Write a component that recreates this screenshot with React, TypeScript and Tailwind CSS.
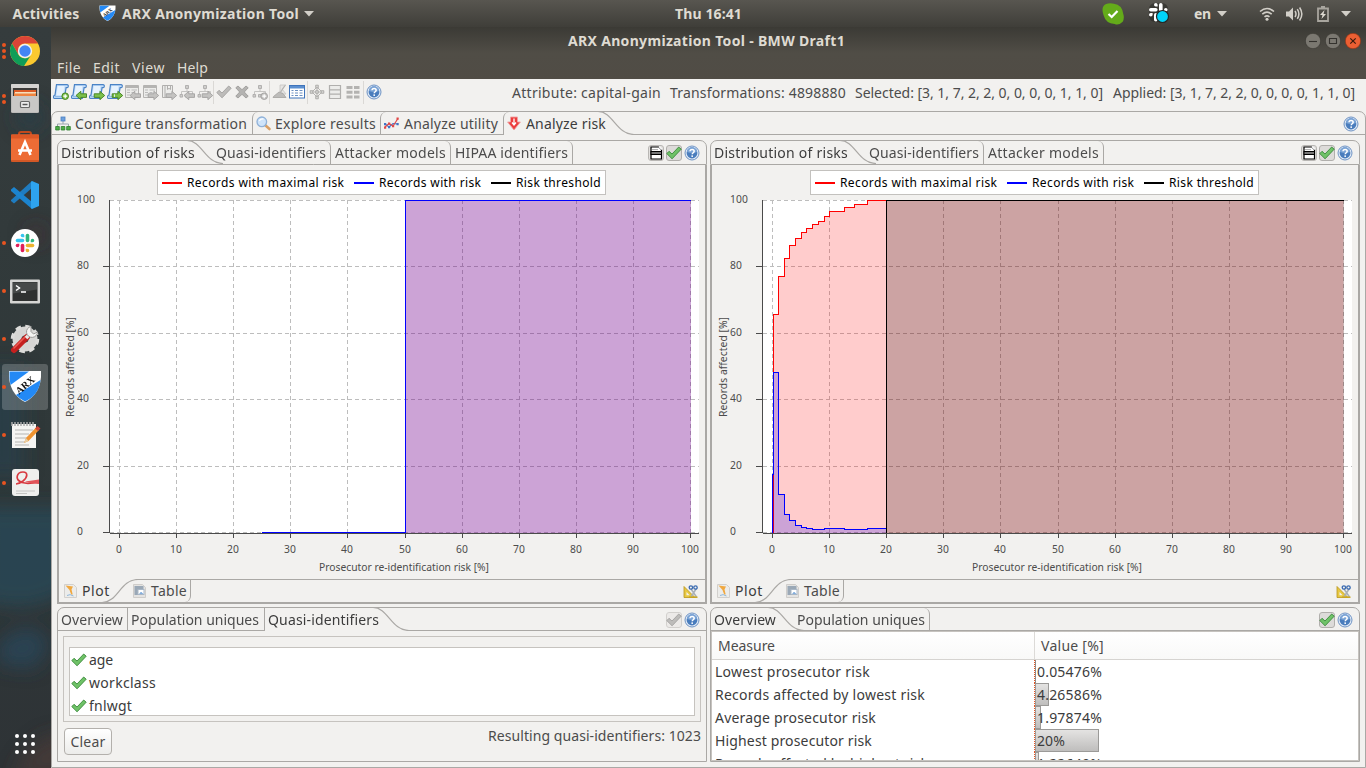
import React, { useLayoutEffect, useRef } from "react";

/* Text run stretched or tightened to an exact advance width. */
function Fit({ w, className = "", children }: { w: number; className?: string; children: string }) {
  const ref = useRef<HTMLSpanElement>(null);
  useLayoutEffect(() => {
    const el = ref.current;
    if (!el) return;
    el.style.letterSpacing = "0px";
    const natural = el.getBoundingClientRect().width;
    el.style.letterSpacing = `${(w - natural) / children.length}px`;
  }, [w, children]);
  return (
    <span ref={ref} className={`inline-block shrink-0 whitespace-pre ${className}`}>
      {children}
    </span>
  );
}

/* ---------- small icons ---------- */
const Help = () => (
  <svg width="16" height="16" viewBox="0 0 16 16" className="shrink-0">
    <circle cx="8" cy="8" r="7" fill="#dfe9f5" stroke="#6f93c4" strokeWidth="1" />
    <circle cx="8" cy="8" r="5.4" fill="#4a7dbd" />
    <path d="M3 7a5 5 0 0 1 10 0q-5 2-10 0z" fill="#7ba4d6" />
    <path d="M6 6.3c0-2.6 4.2-2.4 4.2 0 0 1.4-2 1.5-2 3" fill="none" stroke="#fff" strokeWidth="1.5" />
    <rect x="7.4" y="10.4" width="1.6" height="1.5" fill="#fff" />
  </svg>
);

const Check = ({ gray = false }: { gray?: boolean }) => (
  <svg width="16" height="16" viewBox="0 0 16 16" className="shrink-0">
    <path
      d="M.8 8.6 3 6.3 6 9 12.700 2 15.200 4.200 6.100 13.800z"
      fill={gray ? "#bdbcba" : "#6fc267"}
      stroke={gray ? "#a3a2a0" : "#39893a"}
      strokeWidth="0.9"
      strokeLinejoin="round"
    />
  </svg>
);

const CheckButton = ({ gray = false }: { gray?: boolean }) => (
  <div
    className={`flex h-4 w-4 items-center justify-center rounded-[3px] border ${
      gray ? "border-[#d2d0cd] bg-[#eceae8]" : "border-[#b1afac] bg-[#dddbd9]"
    }`}
  >
    <Check gray={gray} />
  </div>
);

const DocButton = () => (
  <div className="flex h-4 w-4 items-center justify-center rounded-[3px] border border-[#b9b7b4] bg-[#e2e0de]">
    <svg width="14" height="14" viewBox="0 0 14 14" className="shrink-0">
      <path d="M2 1h8l2.5 2.5V13H2z" fill="#fff" stroke="#000" strokeWidth="1.2" />
      <path d="M10 .5 13 3.500" stroke="#fff" strokeWidth="1.500" />
      <rect x="2" y="5.5" width="10.5" height="3" fill="#777" stroke="#000" />
      <path d="M3 3.6h6" stroke="#999" strokeWidth="0.8" />
    </svg>
  </div>
);

const Arrow = ({ left = false, green = true, plus = false }: { left?: boolean; green?: boolean; plus?: boolean }) => {
  const fill = green ? "#7cc04a" : "#c4c3c1";
  const stroke = green ? "#3f7f1c" : "#a3a2a0";
  if (plus)
    return (
      <g>
        <circle cx="12.200" cy="12.200" r="3.300" fill={fill} stroke={stroke} strokeWidth="0.9" />
        <path d="M12.200 10.200v4M10.200 12.200h4" stroke="#fff" strokeWidth="1.2" />
      </g>
    );
  return (
    <path
      d={left ? "M5 11.5 9.8 7.3V9.800H15.500v3.600H9.8v2.300z" : "M15.7 11.5 10.900 7.3V9.800H5.2v3.600h5.700v2.300z"}
      fill={fill}
      stroke={stroke}
      strokeWidth="0.9"
      strokeLinejoin="round"
    />
  );
};

const ToolIcon = ({ kind }: { kind: string }) => (
  <svg width="16" height="16" viewBox="0 0 16 16" className="shrink-0">
    {kind.startsWith("scroll") && (
      <>
        <path d="M3.500.700h10.600c1.700 0 1.500 3 0 3h-1L11.300 14.500H1.500c-1.600 0-1.300-3.300.5-3.300z" fill="#c4defa" stroke="#4a83c6" strokeWidth="1.200" />
        <path d="M4.800 2h6.700L9.900 11.300H3.400z" fill="#e6f2fe" />
        <path d="M1.800 12.700h8.500" stroke="#8db8e6" strokeWidth="1.200" />
        <Arrow plus={kind === "scroll+"} left={kind === "scroll<"} />
        {kind === "scroll>>" && <path d="M7.500 10.300v2.600" stroke="#e6f2fe" strokeWidth=".900" />}
      </>
    )}
    {kind.startsWith("grid") && (
      <>
        <path d="M.5 1.5h13v12H.5z" fill="#ececea" stroke="#b4b3b1" />
        <path d="M.5 3h13" stroke="#b5b4b2" strokeWidth="2" />
        <path d="M2 6h3m1.5 0H12M2 8.500h3m1.500 0h3M2 11h3" stroke="#bbb" />
        <Arrow green={false} left={kind === "grid<"} />
      </>
    )}
    {kind === "book>" && (
      <>
        <path d="M1.500 1.500h10v12h-10zM4 1.500v12M6.500 1.500v4l1.500-1.200L9.500 5.500v-4" fill="#ececea" stroke="#b0afad" />
        <Arrow green={false} />
      </>
    )}
    {kind.startsWith("tree") && (
      <>
        <path d="M8 4.500v3M2.500 10V7.500h11V10" fill="none" stroke="#c5c4c2" />
        <path d="M6.500 1.500h3v3h-3zM1 10.500h2.600v2.600H1zM6.500 10.500h2.600v2.600H6.500z" fill="#cfcecc" stroke="#adacaa" strokeWidth=".900" />
        <Arrow green={false} left={kind === "tree<"} plus={kind === "tree+"} />
      </>
    )}
    {kind === "ok" && <Check gray />}
    {kind === "no" && <path d="M1.800 3.800 4 2l4 3.700L12 2l2.200 1.800L10.300 8l3.900 4.200L12 14l-4-3.700L4 14l-2.200-1.800L5.700 8z" fill="#b4b3b1" stroke="#a3a2a0" />}
    {kind === "broom" && (
      <>
        <path d="M8 1h6l-4 4 4 5h-6z" fill="#e6e5e3" stroke="#c5c4c2" strokeWidth="0.8" />
        <path d="M1.500 12.500 7 8l4 1.500 3 4H1z" fill="#bdbcba" stroke="#a3a2a0" strokeWidth="0.8" />
        <path d="M8 9 13 1.500" stroke="#b5b4b2" strokeWidth="1.300" />
      </>
    )}
    {kind === "table" && (
      <>
        <rect x=".500" y="1.500" width="15" height="12.500" fill="#fff" stroke="#3f74bb" />
        <rect x="1" y="2" width="14" height="2.500" fill="#5b8fd0" />
        <path d="M2.500 6.500h2m1.500 0h3m1.500 0h3M2.500 9h2m1.500 0h3m1.500 0h3M2.500 11.500h2m1.500 0h3m1.500 0h3" stroke="#6b8fc0" />
      </>
    )}
    {kind === "diamond" && (
      <>
        <path d="M8 3 13 8 8 13 3 8zM8 3v10M3 8h10" fill="none" stroke="#b4b3b1" />
        <path d="M6.700 1.200h2.600v2.600H6.700zM6.700 6.700h2.600v2.600H6.700zM6.700 12.200h2.600v2.600H6.700zM1.200 6.700h2.600v2.600H1.200zM12.200 6.700h2.600v2.600h-2.600z" fill="#d8d7d5" stroke="#a3a2a0" strokeWidth=".800" />
      </>
    )}
    {kind === "list" && <path d="M2.500 1.500h11v13h-11zM2.500 5.800h11M2.500 10.200h11" fill="#ececea" stroke="#b0afad" strokeWidth="1.200" />}
    {kind === "blocks" && <path d="M1.500 2h6v3h-6zM9 2h5.500v3H9zM1.500 6.700h6v3h-6zM9 6.700h5.500v3H9zM1.500 11.400h6v3h-6zM9 11.400h5.500v3H9z" fill="#b4b3b1" />}
  </svg>
);

const TreeIcon = () => (
  <svg width="16" height="16" viewBox="0 0 16 16" className="shrink-0">
    <path d="M8 5v3M2.500 11V8h11v3" fill="none" stroke="#9aa5ad" />
    <rect x="6" y="1" width="4" height="4" fill="#6fa0dc" stroke="#4a7fc4" strokeWidth=".800" />
    <path d="M.700 10.500h3.600V14H.700zM6.200 10.500h3.600V14H6.200zM11.700 10.500h3.600V14h-3.600z" fill="#4eae48" stroke="#2c7d2c" strokeWidth=".800" />
  </svg>
);
const MagnifierIcon = () => (
  <svg width="16" height="16" viewBox="0 0 16 16" className="shrink-0">
    <path d="m9 9 4.500 4" stroke="#d9a066" strokeWidth="2.600" strokeLinecap="round" />
    <circle cx="5.800" cy="5.800" r="4.800" fill="#cfe4fa" stroke="#8fb1d8" strokeWidth="1.300" />
    <path d="M3.500 5a3 3 0 0 1 4-1.800" fill="none" stroke="#fff" strokeWidth="1.200" />
  </svg>
);
const LinesIcon = () => (
  <svg width="17" height="16" viewBox="0 0 17 16" className="shrink-0">
    <path d="M2 8 6 11 10 7.500l5 .5" fill="none" stroke="#3f75c8" strokeWidth="1.200" />
    <path d="M2 11 6 7.500l4 2.500 5-7.500" fill="none" stroke="#e04848" strokeWidth="1.200" />
    <path d="M1 7h2.200v2.200H1zM5 10h2.200v2.200H5zM13.500 7h2.200v2.200h-2.200z" fill="#3f75c8" />
    <path d="M1 10.500h2.200v2.200H1zM5 6.500h2.200v2.200H5zM9 9h2.200v2.200H9zM13.500 1.500h2.200v2.200h-2.200z" fill="#e04848" />
  </svg>
);
const RiskIcon = () => (
  <svg width="14" height="16" viewBox="0 0 14 16" className="shrink-0">
    <path d="M3.500 1h7v5h2.900L7 14 .600 6h2.900z" fill="#ec3c3c" stroke="#f0a3a3" strokeWidth=".900" />
    <path d="M7 2.500V8M5 6.500l2 2.400 2-2.400" fill="none" stroke="#fff" strokeWidth="1.300" />
  </svg>
);
const PlotIcon = () => (
  <svg width="13" height="16" viewBox="0 0 13 16" className="shrink-0">
    <path d="M.500 1.500h9L12.500 4.500v10H.500z" fill="#ececea" stroke="#d2d0cd" />
    <path d="M1.500 2.500 9 3.500 7.500 6.500l1.200 5H7.200L5.500 7z" fill="#f0a840" />
    <path d="M3 12.500q3-2 6.500.500" fill="none" stroke="#8fb8dc" />
  </svg>
);
const TableIcon = () => (
  <svg width="13" height="16" viewBox="0 0 13 16" className="shrink-0">
    <path d="M.500 1.500h9L12.500 4.500v10H.500z" fill="#e4e3e1" stroke="#cfcdca" />
    <path d="M1.500 3h9v3H5v6H1.500z" fill="#9aa8b6" />
    <rect x="5" y="6.500" width="6" height="5" fill="#fff" stroke="#a9b7c6" />
    <path d="m6 10.800 2-1.800 2.500 1.800z" fill="#5b93d0" />
  </svg>
);
const ExportIcon = () => (
  <svg width="16" height="16" viewBox="0 0 16 16" className="shrink-0">
    <path d="M1 3.500 12 14.500H1z" fill="#e7c842" stroke="#b9961c" strokeWidth=".800" />
    <path d="M3.500 9v3.200h3.200z" fill="#f3f1ef" />
    <path d="M8 14 13 6M13.500 14 8 6" stroke="#a9b0b8" strokeWidth="1.500" />
    <path d="M6 14.200h8.500" stroke="#c9a522" strokeWidth="1.500" />
    <circle cx="7.900" cy="4.500" r="1.700" fill="none" stroke="#3b6bb0" strokeWidth="1.300" />
    <circle cx="12.500" cy="4.500" r="1.700" fill="none" stroke="#3b6bb0" strokeWidth="1.300" />
  </svg>
);

const ArxArt = () => (
  <>
    <path d="M1 1h32C34 17 27 27 17 32 7 27 0 17 1 1z" fill="#fff" />
    <path d="M1.500 1.500H21L2.500 15Q1 8 1.500 1.500z" fill="#2389f5" />
    <path d="M32.500 10Q31 25 17 31.500 11 28.500 8 25z" fill="#2389f5" />
    <text x="17" y="18.500" textAnchor="middle" transform="rotate(-40 17 15)" fontFamily="Liberation Serif, serif" fontSize="10" fontWeight="bold" fill="#111">
      ARX
    </text>
  </>
);

const Slack = ({ mono = false }: { mono?: boolean }) => {
  const c = mono ? ["#fff", "#fff", "#fff", "#fff"] : ["#36c5f0", "#2eb67d", "#ecb22e", "#e01e5a"];
  return (
    <g>
      <g fill={c[0]}>
        <rect x="0" y="5" width="8.600" height="3.600" rx="1.800" />
        <path d="M8.600 3.600H6.800A1.800 1.800 0 1 1 8.600 1.800z" />
      </g>
      <g fill={c[1]}>
        <rect x="10" y="0" width="3.600" height="8.600" rx="1.800" />
        <path d="M15 8.600V6.800a1.800 1.800 0 1 1 1.800 1.800z" />
      </g>
      <g fill={c[2]}>
        <rect x="10" y="10" width="8.600" height="3.600" rx="1.800" />
        <path d="M10 15h1.800a1.800 1.800 0 1 1-1.800 1.800z" />
      </g>
      <g fill={c[3]}>
        <rect x="5" y="10" width="3.600" height="8.600" rx="1.800" />
        <path d="M3.600 10v1.800A1.800 1.800 0 1 1 1.800 10z" />
      </g>
    </g>
  );
};

/* ---------- dock ---------- */
function DockItem({ dots = 0, active = false, children }: { dots?: number; active?: boolean; children: React.ReactNode }) {
  return (
    <div className="flex h-12 items-center">
      <div className={`ml-[2px] flex h-[46px] w-[46px] items-center rounded-[3px] ${active ? "bg-white/20" : ""}`}>
        <div className="flex w-1 flex-col items-center gap-[2px]">
          {Array.from({ length: dots }, (_, i) => (
            <i key={i} className="h-1 w-1 shrink-0 rounded-full bg-[#e95420]" />
          ))}
        </div>
        <svg width="34" height="34" viewBox="0 0 34 34" className="ml-[2px] shrink-0">
          {children}
        </svg>
      </div>
    </div>
  );
}

function Dock() {
  return (
    <div className="relative flex h-[741px] w-[51px] shrink-0 flex-col overflow-hidden bg-linear-to-b from-[#353c3d] via-[#2f3839] via-55% to-[#2e3336]">
      <svg width="51" height="741" className="absolute inset-0">
        <defs>
          <filter id="haze" filterUnits="userSpaceOnUse" x="-60" y="-60" width="180" height="880">
            <feGaussianBlur stdDeviation="9" />
          </filter>
        </defs>
        <g filter="url(#haze)">
          <path d="M-20 340h44v110h-44z" fill="#25404e" opacity=".6" />
          <path d="M-20 480h90v82q-40 30-90 10z" fill="#27495a" opacity=".75" />
          <path d="M-4 618q36-34 54 0l-16 24-34-4z" fill="#26485c" opacity=".75" />
          <circle cx="36" cy="208" r="10" fill="#4d2f30" opacity=".6" />
          <circle cx="30" cy="90" r="14" fill="#24404c" opacity=".6" />
          <path d="M12 751q20-50 59-44v44z" fill="#4f3a35" opacity=".6" />
        </g>
      </svg>
      <div className="relative flex flex-col">
        <DockItem dots={3}>
          <circle cx="17" cy="17" r="15" fill="#fbc92f" />
          <path d="M4 9.500A15 15 0 0 1 30 9.500H17a7.500 7.500 0 0 0-6.500 3.800l-.2 7z" fill="#db4437" />
          <path d="M4 9.500A15 15 0 0 0 16 32l6.600-10.200A7.500 7.500 0 0 1 10.500 20.700z" fill="#0f9d58" />
          <circle cx="17" cy="17" r="7.200" fill="#f1f1f1" />
          <circle cx="17" cy="17" r="5.700" fill="#4285f4" />
        </DockItem>
        <DockItem dots={2}>
          <rect x="3" y="2" width="28" height="29" rx="1.500" fill="#bcbbb9" />
          <rect x="3" y="2" width="28" height="4" rx="1" fill="#d5d4d2" />
          <rect x="5" y="6" width="24" height="8" fill="#3c3b39" />
          <path d="M6 8h22v6H6z" fill="#dd5b25" />
          <path d="M7 10h21l-1 4H6z" fill="#f6dfbd" />
          <path d="M6 11.500h22V14H6z" fill="#ef8440" />
          <rect x="4" y="14" width="26" height="16" fill="#c9c8c6" />
          <rect x="12.500" y="19.500" width="9" height="6" rx="1" fill="#eee" stroke="#666" strokeWidth="1.200" />
          <path d="M14.500 22.500h5" stroke="#555" strokeWidth="1.500" />
        </DockItem>
        <DockItem>
          <path d="M11 7V4q0-2 2-2h8q2 0 2 2v3" fill="none" stroke="#c2491c" strokeWidth="2" />
          <rect x="3" y="4.500" width="28" height="27.500" rx="1.500" fill="#ed6c35" />
          <rect x="3" y="4.500" width="28" height="4" fill="#dd5826" />
          <path d="M11.500 25 17 12l5.500 13M10 20.500h14" fill="none" stroke="#fff" strokeWidth="2.600" />
          <path d="M3 31h28" stroke="#b94418" />
        </DockItem>
        <DockItem>
          <path d="M24 3v7L6 25.500 3 23V22z" fill="#1f7cc0" />
          <path d="M24 31v-7L6 9 3 11.500V13z" fill="#1c84cf" />
          <path d="m24 3 7 3v22l-7 3-1-1V4z" fill="#2ea3ee" />
        </DockItem>
        <DockItem dots={1}>
          <circle cx="17" cy="17" r="14" fill="#fff" />
          <g transform="translate(7.700 7.700)">
            <Slack />
          </g>
        </DockItem>
        <DockItem dots={1}>
          <rect x="2" y="5.500" width="30" height="24" rx="1" fill="#d5d5d3" />
          <rect x="4.500" y="8" width="25" height="19" fill="#2f3130" />
          <path d="M5 8.500h24v7L5 19.500z" fill="#474a49" />
          <path d="m8 11.500 3.500 2.500L8 16.500M13 18h5" fill="none" stroke="#fff" strokeWidth="1.500" />
        </DockItem>
        <DockItem dots={1}>
          <circle cx="17" cy="17" r="8" fill="none" stroke="#d6d6d4" strokeWidth="9" />
          <circle cx="17" cy="17" r="12.500" fill="none" stroke="#dcdcda" strokeWidth="3.500" strokeDasharray="5.500 4.300" />
          <path d="M6 28 19 15" stroke="#c5201f" strokeWidth="6" strokeLinecap="round" />
          <path d="m6 26 11-11" stroke="#ec5a52" strokeWidth="1.500" strokeLinecap="round" />
          <path d="m18 16 5-5" stroke="#e9e9e7" strokeWidth="3.500" />
          <path d="M23 4.500A5.500 5.500 0 1 0 29.500 10l-4 2-2.500-2.500z" fill="#f4f4f2" stroke="#9a9a98" />
        </DockItem>
        <DockItem dots={1} active>
          <ArxArt />
        </DockItem>
        <DockItem dots={1}>
          <path d="M4 6h24v24H4z" fill="#f5f5f3" />
          <path d="M4 4v4m3-4v4m3-4v4m3-4v4m3-4v4m3-4v4m3-4v4m3-4v4" stroke="#aaa" strokeWidth="1.500" />
          <path d="M7 12h18M7 16h14M7 20h12M7 24h10M7 27h14" stroke="#b5b5b3" />
          <path d="m16 25 2-5L28 9.500l3 2.500L20.500 23z" fill="#f0932f" />
          <path d="m27 10.500 2.500-2.500 3 2.500-2.500 2.500z" fill="#cf4436" />
          <path d="m16 25 2-5 2.500 3z" fill="#e8cfa4" />
        </DockItem>
        <DockItem dots={1}>
          <rect x="4" y="3" width="27" height="27" rx="3" fill="#efefed" />
          <path d="M30 15.500q-9 3-16 1C6 13.500 9 6 15 6c5 0 5 5 0 9q-4 3-7 3" fill="none" stroke="#d83a40" strokeWidth="1.700" />
          <path d="M31 13.500V18q-7 0-14-2.500z" fill="#e2555a" />
          <path d="M8 25h19M8 27.500h11" stroke="#c5c5c3" />
        </DockItem>
      </div>
      <div className="relative mt-auto mb-[14px] ml-[15px] grid w-5 grid-cols-3 gap-1">
        {Array.from({ length: 9 }, (_, i) => (
          <i key={i} className="h-1 w-1 rounded-full bg-white" />
        ))}
      </div>
    </div>
  );
}

/* ---------- shell bars ---------- */
const Caret = () => (
  <svg width="10" height="6" viewBox="0 0 10 6" className="shrink-0">
    <path d="M0 0h10L5 5.500z" fill="#d2cfc8" />
  </svg>
);

function TopBar() {
  return (
    <div className="flex h-[27px] shrink-0 items-center bg-linear-to-b from-[#585650] to-[#3f3e39] text-[14px] font-bold text-[#dfdbd2]">
      <Fit w={67} className="ml-[12.500px]">Activities</Fit>
      <svg width="17" height="17" viewBox="0 0 34 34" className="ml-[19.500px] shrink-0">
        <ArxArt />
      </svg>
      <Fit w={177} className="ml-[6px]">ARX Anonymization Tool</Fit>
      <div className="ml-[5px]"><Caret /></div>
      <Fit w={67} className="ml-[361px]">Thu 16:41</Fit>
      <svg width="22" height="22" viewBox="0 0 22 22" className="ml-[360px] shrink-0">
        <path d="M6 .500Q9 0 12 .800q8 1 9.200 10 1.500 4-.5 8-4 4-8 2.200-9-.5-11.200-9Q0 8 .800 4.500 2 1 6 .500z" fill="#64ab1a" />
        <path d="m6.500 11 3.200 3L15.500 8" fill="none" stroke="#fff" strokeWidth="2.200" />
      </svg>
      <svg width="21" height="21" viewBox="0 0 21 21" className="ml-[25px] shrink-0">
        <rect width="19" height="19" rx="6" fill="#292927" opacity=".6" />
        <Slack mono />
        <circle cx="13.500" cy="13.500" r="6" fill="#00d4fa" stroke="#262624" strokeWidth="1.200" />
      </svg>
      <Fit w={17} className="ml-[24px]">en</Fit>
      <div className="ml-[6px]"><Caret /></div>
      <svg width="16" height="14" viewBox="0 0 16 14" className="ml-[32px] shrink-0">
        <path d="M1 4.500q7-6 14 0M3.300 7.200q4.700-4 9.400 0M5.500 9.900q2.500-2 5 0" fill="none" stroke="#d2cfc8" strokeWidth="1.600" />
        <circle cx="8" cy="12.200" r="1.500" fill="#d2cfc8" />
      </svg>
      <svg width="17" height="16" viewBox="0 0 17 16" className="ml-[11px] shrink-0">
        <path d="M0 5.500h3L7 1.500v13L3 10.500H0z" fill="#d2cfc8" />
        <path d="M9 5q2 3 0 6M11.300 3.200q3.200 4.800 0 9.600M13.600 1.500q4.500 6.500 0 13" fill="none" stroke="#d2cfc8" strokeWidth="1.500" />
      </svg>
      <svg width="12" height="16" viewBox="0 0 12 16" className="ml-[14px] shrink-0">
        <path d="M1 2.500h10V15H1z" fill="none" stroke="#a8a59e" strokeWidth="1.800" />
        <path d="M4 0h4v2H4z" fill="#a8a59e" />
        <path d="m7.500 4-4.500 5h2.500L4.500 13 9 8H6.500z" fill="#dfdbd2" />
      </svg>
      <div className="ml-[12px]"><Caret /></div>
    </div>
  );
}

function TitleBar() {
  return (
    <div className="h-[52px] shrink-0 bg-linear-to-b from-[#3b3a35] via-[#504d46] via-50% to-[#504c45] text-[14px] text-[#dfdbd2]">
      <div className="flex h-7 items-center">
        <Fit w={277} className="ml-[517px] font-bold">ARX Anonymization Tool - BMW Draft1</Fit>
        <div className="mr-[5px] ml-auto flex gap-1">
          <svg width="16" height="16" viewBox="0 0 16 16"><circle cx="8" cy="8" r="7.700" fill="#7b7871" stroke="#34322e" strokeWidth=".600" /><path d="M4 8.500h8" stroke="#34322e" strokeWidth="1.100" /></svg>
          <svg width="16" height="16" viewBox="0 0 16 16"><circle cx="8" cy="8" r="7.700" fill="#7b7871" stroke="#34322e" strokeWidth=".600" /><path d="M4.500 5.500h7v5h-7z" fill="none" stroke="#34322e" strokeWidth="1.100" /></svg>
          <svg width="16" height="16" viewBox="0 0 16 16"><circle cx="8" cy="8" r="7.700" fill="#ec5f33" stroke="#8d3013" strokeWidth=".600" /><path d="m5.300 5.300 5.400 5.400m0-5.400-5.400 5.400" stroke="#3a1a0d" strokeWidth="1.200" /></svg>
        </div>
      </div>
      <div className="flex h-6 items-center pt-[2px] pl-[6px]">
        <Fit w={24}>File</Fit>
        <Fit w={27} className="ml-[12px]">Edit</Fit>
        <Fit w={33} className="ml-[12px]">View</Fit>
        <Fit w={31} className="ml-[12px]">Help</Fit>
      </div>
    </div>
  );
}

const Sep = () => <div className="mt-[-3px] h-[23px] w-px shrink-0 bg-[#dad8d5]" />;

function ToolBar() {
  return (
    <div className="flex h-8 shrink-0 items-start pt-[5px] pr-[11px] pl-[2px]">
      <div className="flex items-start">
        <div className="flex gap-[2px]">
          {["scroll+", "scroll<", "scroll>", "scroll>>", "grid<", "grid>", "book>", "tree<", "tree>"].map((k) => (
            <ToolIcon key={k} kind={k} />
          ))}
        </div>
        <Sep />
        <div className="ml-[2px] flex gap-[2px]">
          <ToolIcon kind="ok" /><ToolIcon kind="no" /><ToolIcon kind="tree+" />
        </div>
        <div className="ml-px"><Sep /></div>
        <div className="ml-[2px] flex gap-[1px]">
          <ToolIcon kind="broom" /><ToolIcon kind="table" />
        </div>
        <div className="ml-[2px]"><Sep /></div>
        <div className="ml-px flex gap-[2px]">
          <ToolIcon kind="diamond" /><ToolIcon kind="list" /><ToolIcon kind="blocks" />
        </div>
        <div className="ml-[2px]"><Sep /></div>
        <div className="ml-[2px]"><Help /></div>
      </div>
      <div className="mt-[-2px] ml-auto flex">
        <Fit w={149}>Attribute: capital-gain</Fit>
        <Fit w={176} className="ml-[9px]">Transformations: 4898880</Fit>
        <Fit w={248} className="ml-[9px]">Selected: [3, 1, 7, 2, 2, 0, 0, 0, 0, 1, 1, 0]</Fit>
        <Fit w={242} className="ml-[10px]">Applied: [3, 1, 7, 2, 2, 0, 0, 0, 0, 1, 1, 0]</Fit>
      </div>
    </div>
  );
}

/* ---------- folder pieces ---------- */
const Slope = ({ className }: { className: string }) => (
  <svg width="36" height="24" viewBox="0 0 36 24" className={`absolute -top-px ${className}`}>
    <path d="M0 .500C15 .500 18 23.500 36 23.500" fill="none" stroke="#aaa8a5" strokeWidth="1.200" />
  </svg>
);

const MAX_RISK =
  "M773.500 533V314.500H778.500V276.500H784.500V258.500H789.500V245.500H795.500V238.500H801.500V232.500H806.500V228.500H812.500V224.500H818.500V221.500H824.500V216.500H829.500V211.500H844.500V207.500H854.500V204.500H867.500V200.500H886.500";
const WITH_RISK =
  "M772.500 533V474.500H773.500V372.500H778.500V494.500H784.500V514.500H789.500V520.500H795.500V525.500H801.500V527.500H806.500V528.500H812.500V529.500H824.500V528.500H844.500V529.500H867.500V528.500H886.500";

function Chart({ kind }: { kind: "left" | "right" }) {
  const xs = Array.from({ length: 11 }, (_, i) => Math.floor(772.5 + 57.1 * i) + 0.5);
  const ys = [532.5, 466.5, 399.5, 333.5, 266.5, 200.5];
  return (
    <div className="flex min-h-0 flex-1 flex-col items-start pt-[5px]">
      <div className="ml-[98px] flex h-[25px] w-[449px] shrink-0 items-center border border-[#c3c1be] bg-white pl-[4px] text-[12px] text-black">
        <i className="h-[2px] w-5 bg-[#ff0000]" />
        <Fit w={157.4} className="ml-[5px]">Records with maximal risk</Fit>
        <i className="ml-[9.600px] h-[2px] w-5 bg-[#0000ff]" />
        <Fit w={102.4} className="ml-[5px]">Records with risk</Fit>
        <i className="ml-[9.600px] h-[2px] w-5 bg-black" />
        <Fit w={85} className="ml-[5px]">Risk threshold</Fit>
      </div>
      <svg width="645" height="384" viewBox="712 195 645 384" className="shrink-0 overflow-visible" fontFamily="Noto Sans, sans-serif" fontSize="10.300" fill="#4c4c4c">
        <rect x="763" y="200" width="589" height="333" fill="#fff" />
        <g stroke="#bdbdbd" strokeDasharray="4 3" shapeRendering="crispEdges">
          {xs.map((x) => <path key={x} d={`M${x} 533V200`} />)}
          {ys.map((y) => <path key={y} d={`M763 ${y}H1352`} />)}
        </g>
        {kind === "left" ? (
          <>
            <rect x="1058" y="200" width="286" height="333" fill="#ff0000" fillOpacity=".2" />
            <rect x="1058" y="200" width="286" height="333" fill="#0000ff" fillOpacity=".2" />
            <path d="M915 532.500H1058.500V200.500H1343.500" fill="none" stroke="#0000ff" shapeRendering="crispEdges" />
          </>
        ) : (
          <>
            <path d={`${MAX_RISK}H1343.500V533z`} fill="#ff0000" fillOpacity=".2" />
            <path d={MAX_RISK} fill="none" stroke="#ff0000" shapeRendering="crispEdges" />
            <path d={`${WITH_RISK}V533z`} fill="#0000ff" fillOpacity=".2" />
            <path d={WITH_RISK} fill="none" stroke="#0000ff" shapeRendering="crispEdges" />
            <rect x="886" y="200" width="458" height="333" fill="#000" fillOpacity=".2" />
            <path d="M886.500 533V200.500H1343.500" fill="none" stroke="#000" shapeRendering="crispEdges" />
          </>
        )}
        <g stroke="#4a4a4a" shapeRendering="crispEdges">
          <path d="M762.500 200V533M763 533.500H1352" />
          {xs.map((x) => <path key={x} d={`M${x} 533v5`} />)}
          {ys.slice(0, 5).map((y) => <path key={y} d={`M756 ${y}h6`} />)}
        </g>
        {xs.map((x, i) => (
          <text key={x} x={x - 0.5} y="553" textAnchor="middle" textLength={i === 0 ? 6 : i === 10 ? 18 : 12}>{i * 10}</text>
        ))}
        {ys.map((y, i) => (
          <text key={y} x="730" y={y + 2.5} textLength={i === 0 ? 6 : i === 5 ? 18 : 12}>{i * 20}</text>
        ))}
        <text x="1057" y="571" textAnchor="middle" textLength="170">Prosecutor re-identification risk [%]</text>
        <text transform="translate(727 367) rotate(-90)" textAnchor="middle" textLength="100">Records affected [%]</text>
      </svg>
    </div>
  );
}

const PlainTab = ({ w, text, className }: { w: number; text: string; className: string }) => (
  <div className={`flex h-full shrink-0 items-center border-r border-[#aaa8a5] ${className}`}>
    <Fit w={w}>{text}</Fit>
  </div>
);

function ChartFolder({ kind }: { kind: "left" | "right" }) {
  return (
    <section className="flex h-[464px] w-[650px] shrink-0 flex-col">
      <div className="relative flex h-[25px] shrink-0 items-center rounded-t-[7px] border border-[#aaa8a5] pl-[3px]">
        <Fit w={134} className="text-[#3c3c3c]">Distribution of risks</Fit>
        <Slope className="left-[129px]" />
        <PlainTab w={110} text="Quasi-identifiers" className="ml-[21px] w-[115px] rounded-tr-[6px]" />
        <PlainTab w={111} text="Attacker models" className="w-[120px] rounded-tr-[6px] pl-[4px]" />
        {kind === "left" && <PlainTab w={113} text="HIPAA identifiers" className="w-[122px] rounded-tr-[6px] pl-[4px]" />}
        <div className="mr-[6px] ml-auto flex gap-[2px]">
          <DocButton /><CheckButton /><Help />
        </div>
      </div>
      <div className="flex min-h-0 flex-1 flex-col border-x-2 border-b-2 border-[#aaa8a5]">
        <Chart kind={kind} />
        <div className="relative flex h-[23px] shrink-0 items-center pl-[5px]">
          <PlotIcon />
          <Fit w={28} className="ml-[5px] text-[#3c3c3c]">Plot</Fit>
          <svg width="36" height="24" viewBox="0 0 36 24" className="absolute top-0 left-[43px]">
            <path d="M0 23.500C16 23.500 18 .500 36 .500" fill="none" stroke="#aaa8a5" strokeWidth="1.200" />
          </svg>
          <div className="ml-[23px] flex h-full w-[58px] shrink-0 items-center rounded-br-[6px] border-r border-[#aaa8a5]">
            <TableIcon />
            <Fit w={36} className="ml-[5px]">Table</Fit>
          </div>
          <div className="absolute top-0 right-0 left-[78px] h-px bg-[#aaa8a5]" />
          <div className="mr-[6px] ml-auto"><ExportIcon /></div>
        </div>
      </div>
    </section>
  );
}

function QuasiFolder() {
  return (
    <section className="flex h-[155px] w-[650px] shrink-0 flex-col rounded-t-[7px] border border-[#aaa8a5]">
      <div className="relative flex h-[23px] shrink-0 items-center">
        <div className="flex h-full w-[207px] shrink-0 border-b border-[#aaa8a5]">
          <PlainTab w={62} text="Overview" className="w-[70px] pt-px pl-[3px]" />
          <PlainTab w={128} text="Population uniques" className="w-[137px] pt-px pl-[3px]" />
        </div>
        <Fit w={111} className="ml-[3px] text-[#3c3c3c]">Quasi-identifiers</Fit>
        <Slope className="left-[315px]" />
        <div className="ml-[29px] flex h-full flex-1 items-center justify-end gap-[2px] border-b border-[#aaa8a5] pt-px pr-[6px]">
          <CheckButton gray /><Help />
        </div>
      </div>
      <div className="mx-[5px] mt-[5px] h-[86px] shrink-0 border border-[#c6c3bf] px-[5px] pt-[10px]">
        <div className="flex h-[69px] flex-col border border-[#c6c3bf] bg-white pl-[1px] text-[#3c3c3c]">
          {([["age", 24], ["workclass", 67], ["fnlwgt", 43]] as [string, number][]).map(([t, w]) => (
            <div key={t} className="flex h-[23px] shrink-0 items-center">
              <Check />
              <Fit w={w} className="ml-[2px]">{t}</Fit>
            </div>
          ))}
        </div>
      </div>
      <div className="flex items-start pt-[6px] pr-[5px] pl-[6px]">
        <button className="flex h-[27px] w-[48px] items-center justify-center rounded-[4px] border border-[#b3b0ac] bg-linear-to-b from-white to-[#ececea]">
          <Fit w={35}>Clear</Fit>
        </button>
        <Fit w={213} className="mt-[-3px] ml-auto">Resulting quasi-identifiers: 1023</Fit>
      </div>
    </section>
  );
}

const measures: { name: string; w: number; value: string; vw: number; bar: number }[] = [
  { name: "Lowest prosecutor risk", w: 155, value: "0.05476%", vw: 65, bar: 0 },
  { name: "Records affected by lowest risk", w: 210, value: "4.26586%", vw: 65, bar: 14 },
  { name: "Average prosecutor risk", w: 161, value: "1.97874%", vw: 65, bar: 6 },
  { name: "Highest prosecutor risk", w: 157, value: "20%", vw: 28, bar: 64 },
  { name: "Records affected by highest risk", w: 213, value: "1.22649%", vw: 65, bar: 4 },
];

function OverviewFolder() {
  return (
    <section className="flex h-[155px] w-[650px] shrink-0 flex-col rounded-t-[7px] border border-[#aaa8a5]">
      <div className="relative flex h-[23px] shrink-0 items-center border-b border-[#aaa8a5] pl-[3px]">
        <Fit w={62} className="mt-px text-[#3c3c3c]">Overview</Fit>
        <Slope className="left-[57px]" />
        <PlainTab w={128} text="Population uniques" className="ml-[21px] w-[133px] rounded-tr-[6px] pt-px" />
        <div className="mr-[6px] ml-auto flex gap-[2px] pt-px"><CheckButton /><Help /></div>
      </div>
      <div className="flex min-h-0 flex-1 flex-col overflow-hidden border border-[#c6c3bf] bg-white text-[#3c3c3c]">
        <div className="flex h-[28px] shrink-0 items-center border-b border-[#d6d4d1] bg-linear-to-b from-white to-[#f9f9f8] text-[#4c4c4c]">
          <div className="flex h-full w-[323px] items-center border-r border-[#dcdad7] pl-[6px]"><Fit w={57}>Measure</Fit></div>
          <Fit w={63} className="ml-[6px]">Value [%]</Fit>
        </div>
        {measures.map((m) => (
          <div key={m.name} className="flex h-[23px] shrink-0 items-center">
            <div className="flex h-full w-[323px] shrink-0 items-center border-r border-dotted border-[#e95420] pl-[3px]"><Fit w={m.w}>{m.name}</Fit></div>
            <div className="relative flex h-full items-center border-l border-[#8d8d8b]">
              {m.bar > 0 && (
                <i className="absolute top-0 -left-px h-full border border-[#9b9a98] bg-linear-to-b from-[#e4e3e2] to-[#bfbebd]" style={{ width: m.bar }} />
              )}
              <Fit w={m.vw} className="relative ml-px">{m.value}</Fit>
            </div>
          </div>
        ))}
      </div>
    </section>
  );
}

export default function App() {
  return (
    <div className="flex h-[768px] w-[1366px] flex-col overflow-hidden bg-[#f2f1ef] font-['Noto_Sans',sans-serif] text-[14px] leading-[22px] text-[#4c4c4c]">
      <TopBar />
      <div className="flex min-h-0 flex-1">
        <Dock />
        <main className="flex min-w-0 flex-1 flex-col">
          <TitleBar />
          <ToolBar />
          <section className="flex min-h-0 flex-1 flex-col rounded-t-[7px] border border-[#aaa8a5]">
            <div className="relative flex h-[23px] shrink-0 items-center">
              <div className="flex h-full w-[451px] shrink-0 items-center border-b border-[#aaa8a5]">
                <div className="flex h-full w-[200px] items-center pt-px pl-[3px]"><TreeIcon /><Fit w={172} className="ml-[4px]">Configure transformation</Fit></div>
                <div className="flex h-full w-[128px] items-center rounded-tl-[6px] border-l border-[#aaa8a5] pt-px pl-[3px]"><MagnifierIcon /><Fit w={101} className="ml-[3px]">Explore results</Fit></div>
                <div className="flex h-full w-[123px] items-center rounded-tl-[6px] border-l border-[#aaa8a5] pt-px pl-[2px]"><LinesIcon /><Fit w={94} className="ml-[4px]">Analyze utility</Fit></div>
              </div>
              <div className="flex h-full w-[129px] shrink-0 items-center rounded-tl-[6px] border-l border-[#aaa8a5] pl-[3px] text-[#3c3c3c]"><RiskIcon /><Fit w={80} className="ml-[5px]">Analyze risk</Fit></div>
              <Slope className="left-[546px]" />
              <div className="flex h-full flex-1 items-center justify-end border-b border-[#aaa8a5] pt-px pr-[6px]"><Help /></div>
            </div>
            <div className="grid grid-cols-[650px_650px] gap-[3px] pt-[5px] pl-[5px]">
              <ChartFolder kind="left" />
              <ChartFolder kind="right" />
              <QuasiFolder />
              <OverviewFolder />
            </div>
          </section>
        </main>
      </div>
    </div>
  );
}
